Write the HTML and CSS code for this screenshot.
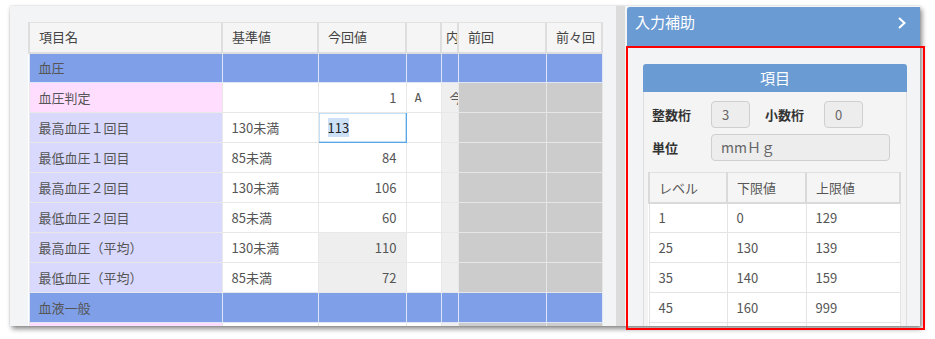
FILE: index.html
```html
<!DOCTYPE html>
<html lang="ja">
<head>
<meta charset="utf-8">
<link rel="stylesheet" href="styles.css">
</head>
<body>
<div class="window">
  <div class="left">
    <table class="grid">
      <colgroup>
        <col class="c1"><col class="c2"><col class="c3"><col class="c4"><col class="c5"><col class="c6"><col class="c7">
      </colgroup>
      <thead>
        <tr><th>項目名</th><th>基準値</th><th>今回値</th><th></th><th class="narrow">内容</th><th>前回</th><th>前々回</th></tr>
      </thead>
      <tbody>
        <tr class="group"><td>血圧</td><td></td><td></td><td></td><td></td><td></td><td></td></tr>
        <tr><td class="pink">血圧判定</td><td></td><td class="num">1</td><td class="mono">A</td><td class="narrow nb">今回</td><td class="old"></td><td class="old"></td></tr>
        <tr><td class="lav">最高血圧１回目</td><td>130未満</td><td class="edit"><span class="sel">113</span></td><td></td><td class="nb"></td><td class="old"></td><td class="old"></td></tr>
        <tr><td class="lav">最低血圧１回目</td><td>85未満</td><td class="num">84</td><td></td><td class="nb"></td><td class="old"></td><td class="old"></td></tr>
        <tr><td class="lav">最高血圧２回目</td><td>130未満</td><td class="num">106</td><td></td><td class="nb"></td><td class="old"></td><td class="old"></td></tr>
        <tr><td class="lav">最低血圧２回目</td><td>85未満</td><td class="num">60</td><td></td><td class="nb"></td><td class="old"></td><td class="old"></td></tr>
        <tr><td class="lav">最高血圧（平均）</td><td>130未満</td><td class="num calc">110</td><td></td><td class="nb"></td><td class="old"></td><td class="old"></td></tr>
        <tr><td class="lav">最低血圧（平均）</td><td>85未満</td><td class="num calc">72</td><td></td><td class="nb"></td><td class="old"></td><td class="old"></td></tr>
        <tr class="group"><td>血液一般</td><td></td><td></td><td></td><td></td><td></td><td></td></tr>
        <tr><td class="pink"></td><td></td><td></td><td></td><td class="nb"></td><td class="old"></td><td class="old"></td></tr>
      </tbody>
    </table>
  </div>
  <div class="splitter"></div>
  <div class="right">
    <div class="assist-head">
      <span class="assist-title">入力補助</span>
      <svg class="chev" width="10" height="14" viewBox="0 0 10 14"><polyline points="2,2 7.5,7 2,12" fill="none" stroke="#fff" stroke-width="2"/></svg>
    </div>
    <div class="item-panel">
      <div class="item-head">項目</div>
      <div class="item-body">
        <div class="field-row">
          <span class="lbl">整数桁</span><span class="box small">3</span>
          <span class="lbl lbl2">小数桁</span><span class="box small">0</span>
        </div>
        <div class="field-row">
          <span class="lbl">単位</span><span class="box wide">mmＨｇ</span>
        </div>
        <table class="levels">
          <colgroup><col class="l1"><col class="l2"><col class="l3"></colgroup>
          <thead><tr><th>レベル</th><th>下限値</th><th>上限値</th></tr></thead>
          <tbody>
            <tr><td>1</td><td>0</td><td>129</td></tr>
            <tr><td>25</td><td>130</td><td>139</td></tr>
            <tr><td>35</td><td>140</td><td>159</td></tr>
            <tr><td>45</td><td>160</td><td>999</td></tr>
            <tr><td></td><td></td><td></td></tr>
          </tbody>
        </table>
      </div>
    </div>
  </div>
</div>
<div class="highlight"></div>
</body>
</html>
```

FILE: styles.css
```css
html, body {
  margin: 0;
  padding: 0;
  background: #ffffff;
}
body {
  width: 935px;
  height: 339px;
  overflow: hidden;
  position: relative;
  font-family: "Noto Sans CJK JP", "Noto Sans", sans-serif;
  font-size: 13px;
  color: #555;
}
.window {
  margin: 6px 0 0 10px;
  width: 910px;
  height: 320px;
  background: #f3f4f6;
  box-shadow: 2px 3px 5px rgba(0,0,0,0.45), 0 0 2px rgba(0,0,0,0.15);
  display: flex;
  overflow: hidden;
}
.left {
  width: 606px;
  flex: none;
  padding: 16px 0 0 18px;
  box-sizing: border-box;
  overflow: hidden;
}
.grid {
  table-layout: fixed;
  border-collapse: collapse;
  width: 573px;
  background: #fff;
}
.c1 { width: 193px; }
.c2 { width: 96px; }
.c3 { width: 88px; }
.c4 { width: 35px; }
.c5 { width: 17px; }
.c6 { width: 88px; }
.c7 { width: 56px; }
.grid tr { height: 30px; }
.grid th, .grid td {
  padding: 0 0 0 9px;
  border: 1px solid #e8e8e8;
  white-space: nowrap;
  overflow: hidden;
  text-align: left;
  font-weight: normal;
  line-height: 18px;
}
.grid th {
  background: #f5f5f5;
  color: #444;
  border: 2px solid #dedede;
  border-top: 1px solid #e2e2e2;
}
.grid th.narrow { padding-left: 4px; }
.grid td.narrow { padding-left: 8px; }
.grid .group td {
  background: #7f9fe8;
  border-color: #dfe6f8;
}
.grid td.pink { background: #ffddff; }
.grid td.lav { background: #d9d9fd; }
.grid td.num {
  text-align: right;
  padding: 0 9px 0 0;
}
.grid td.calc { background: #eeeeee; }
.grid td.nb { background: #efefef; }
.grid td.old { background: #cccccc; border-color: #e6e6e6; }
.grid td.mono { font-family: "DejaVu Sans Mono", monospace; font-size: 12px; padding-left: 8px; }
.grid td.edit {
  border: 1px solid #5aa5e6;
  box-shadow: inset 0 0 0 0.5px #8cc3f0;
  color: #222;
  padding-left: 9px;
}
.sel { background: #cce0f7; }
.splitter {
  width: 9px;
  flex: none;
  background: #dcdcdc;
}
.right {
  flex: 1;
  padding-left: 2px;
  display: flex;
  flex-direction: column;
  min-height: 0;
}
.assist-head {
  flex: none;
  height: 39px;
  margin-top: 1px;
  background: #6b9bd3;
  border-radius: 3px 3px 0 0;
  display: flex;
  align-items: flex-start;
  justify-content: space-between;
  padding: 3px 15px 0 8px;
  box-sizing: border-box;
}
.assist-title {
  color: #fff;
  font-size: 15px;
  line-height: 24px;
}
.chev { margin-top: 6px; }
.item-panel {
  flex: 1;
  min-height: 0;
  margin: 18px 15px 0 16px;
  display: flex;
  flex-direction: column;
}
.item-head {
  flex: none;
  height: 28px;
  background: #6b9bd3;
  border-radius: 3px 3px 0 0;
  color: #fff;
  font-size: 15px;
  line-height: 28px;
  text-align: center;
}
.item-body {
  flex: 1;
  min-height: 0;
  overflow: hidden;
  border-left: 1px solid #dedede;
  border-right: 1px solid #dedede;
  background: #f4f4f5;
  padding: 9px 5px 0 4px;
}
.field-row {
  display: flex;
  align-items: center;
  margin-bottom: 6px;
}
.lbl {
  width: 63px;
  flex: none;
  padding-left: 4px;
  box-sizing: border-box;
  color: #333;
  font-weight: bold;
  font-size: 13px;
}
.lbl2 { margin-left: 11px; }
.box {
  flex: none;
  height: 27px;
  box-sizing: border-box;
  border: 1px solid #cfcfcf;
  border-radius: 4px;
  background: #ededed;
  color: #666;
  line-height: 25px;
  padding-left: 10px;
  font-size: 13px;
}
.small { width: 39px; }
.wide { width: 179px; font-size: 14px; padding-left: 9px; }
.levels {
  margin-top: 11px;
  table-layout: fixed;
  border-collapse: collapse;
  width: 251px;
  background: #fff;
}
.l1 { width: 78px; }
.l2 { width: 79px; }
.l3 { width: 94px; }
.levels tr { height: 30px; }
.levels th, .levels td {
  border: 1px solid #e4e4e4;
  padding: 0 0 0 9px;
  text-align: left;
  font-weight: normal;
  color: #555;
}
.levels th {
  background: #f5f5f5;
  border: 2px solid #dadada;
  border-top: 1px solid #e0e0e0;
}
.highlight {
  position: absolute;
  left: 626px;
  top: 46px;
  width: 299px;
  height: 284px;
  box-sizing: border-box;
  border: 2px solid #ff0000;
  pointer-events: none;
}
```
